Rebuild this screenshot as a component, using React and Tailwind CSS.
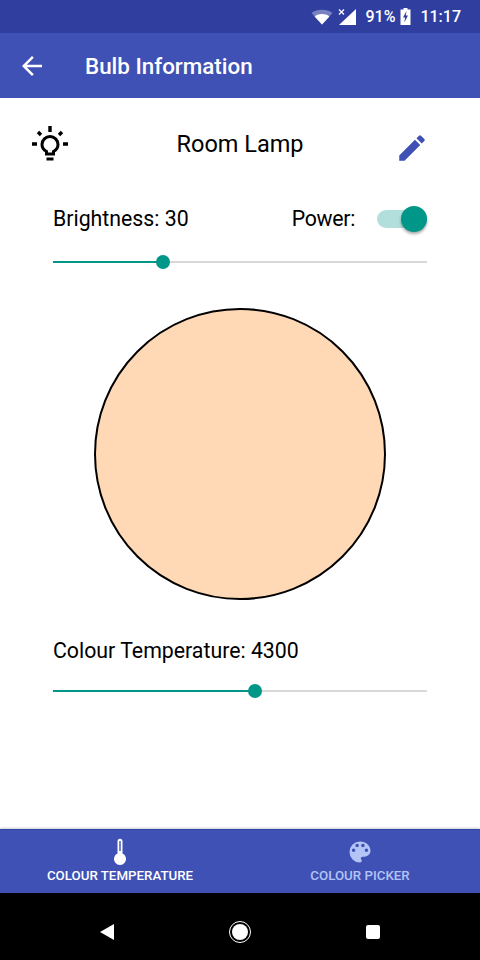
import React from "react";

const font = { fontFamily: "Roboto, sans-serif" };

function Slider({ pct }) {
  return (
    <div className="relative mx-[53px] h-[2px] bg-[#d9d9d9]">
      <div className="h-[2px] bg-[#009688]" style={{ width: pct }} />
      <div className="absolute top-[-6px] w-[14px] h-[14px] rounded-full bg-[#009688]" style={{ left: `calc(${pct} - 7px)` }} />
    </div>
  );
}

export default function App() {
  return (
    <div className="w-[480px] h-[960px] flex flex-col bg-white text-black overflow-hidden" style={font}>
      <div className="h-[33px] bg-[#303f9f] flex items-center justify-end text-white pr-[19px]">
        <svg width="22" height="16" viewBox="0 0 22 15" className="mr-[5px]">
          <path d="M11 15 L0.5 3.6 C6.5 -0.8 15.5 -0.8 21.5 3.6 Z" fill="#fff" fillOpacity="0.35" />
          <path d="M11 15 L3.6 6.9 C8 3.8 14 3.8 18.4 6.9 Z" fill="#fff" />
        </svg>
        <svg width="18" height="16" viewBox="0 0 18 16" className="mr-[9px]">
          <path d="M18 0 V16 H1 Z" fill="#fff" />
          <path d="M1 0.5 L6 5.5 M6 0.5 L1 5.5" stroke="#303f9f" strokeWidth="3" />
          <path d="M1 0.5 L6 5.5 M6 0.5 L1 5.5" stroke="#fff" strokeWidth="1.2" />
        </svg>
        <span className="text-[16px] font-medium mr-[5px] leading-none">91%</span>
        <svg width="11" height="17" viewBox="0 0 10 17" className="mr-[9px]">
          <path d="M3 0 H7 V1.5 H10 V17 H0 V1.5 H3 Z" fill="#fff" />
          <path d="M6 3 L2.5 9.5 H4.6 L3.8 14.5 L7.5 7.5 H5.3 Z" fill="#303f9f" />
        </svg>
        <span className="text-[16px] font-medium leading-none">11:17</span>
      </div>

      <div className="h-[65px] bg-[#3f51b5] flex items-center text-white pt-px">
        <svg width="30" height="30" viewBox="0 0 24 24" className="ml-[17px]" fill="#fff">
          <path d="M20 11H7.83l5.59-5.59L12 4l-8 8 8 8 1.41-1.41L7.83 13H20v-2z" />
        </svg>
        <span className="ml-[38px] text-[22.4px] font-medium leading-none">Bulb Information</span>
      </div>

      <div className="flex-1 flex flex-col">
        <div className="flex items-center justify-between h-[36px] mt-[28px] pl-[30px] pr-[51px] relative">
          <svg width="40" height="37" viewBox="0 0 40 37" fill="none" stroke="#000" className="mt-[1px]">
            <path d="M20 0 V6 M2 18 H7 M33 18 H38 M8 6 L11 9 M32 6 L29 9" strokeWidth="3.4" />
            <path d="M16.5 28 V25.5 C13.5 24 12 21 12 18.5 A8 8 0 0 1 28 18.5 C28 21 26.5 24 23.5 25.5 V28 Z" strokeWidth="3" />
            <path d="M16.5 33 H23.5" strokeWidth="3" />
          </svg>
          <span className="absolute left-0 right-0 top-[1px] bottom-0 flex items-center justify-center text-[23.5px] leading-none">Room Lamp</span>
          <svg width="34" height="34" viewBox="0 0 24 24" fill="#3f51b5" className="mt-[7px]">
            <path d="M3 17.25V21h3.75L17.81 9.94l-3.75-3.75L3 17.25zM20.71 7.04a1 1 0 0 0 0-1.41l-2.34-2.34a1 1 0 0 0-1.41 0l-1.83 1.83 3.75 3.75 1.83-1.83z" />
          </svg>
        </div>

        <div className="flex items-center h-[32px] mt-[41px] pl-[53px] pr-[53px]">
          <span className="text-[21.3px] leading-none">Brightness: 30</span>
          <span className="ml-auto text-[21.3px] leading-none tracking-[-0.3px]">Power:</span>
          <div className="relative w-[50px] h-[18px] ml-[22px] rounded-full bg-[#b2dfdb]">
            <div className="absolute right-0 top-[-4px] w-[26px] h-[26px] rounded-full bg-[#009688] shadow-[0_2px_3px_rgba(0,0,0,0.35)]" />
          </div>
        </div>

        <div className="mt-[26px]"><Slider pct="29.5%" /></div>

        <div className="mt-[45px] mx-auto w-[292px] h-[292px] rounded-full border-2 border-black bg-[#ffd8b5]" />

        <div className="mt-[39px] pl-[53px] text-[21.3px] leading-[24px]">Colour Temperature: 4300</div>
        <div className="mt-[27px]"><Slider pct="54%" /></div>
      </div>

      <div className="h-[64px] bg-[#3f51b5] flex border-t border-[#3049a8] shadow-[0_-1px_2px_rgba(0,0,0,0.2)]">
        <div className="flex-1 flex flex-col items-center text-white">
          <svg width="16" height="28" viewBox="0 0 16 28" className="mt-[8px]" fill="#fff">
            <path d="M5.5 3.2 A2.5 2.5 0 0 1 10.5 3.2 V15.5 A6 6 0 1 1 5.5 15.5 Z" />
            <path d="M8 3 V13" stroke="#3f51b5" strokeWidth="1.4" />
          </svg>
          <span className="text-[13.3px] font-medium leading-none mt-[3px]">COLOUR TEMPERATURE</span>
        </div>
        <div className="flex-1 flex flex-col items-center text-[#b4c4f6]">
          <svg width="28" height="28" viewBox="0 0 24 24" className="mt-[8px]" fill="#b4c4f6">
            <path d="M12 3a9 9 0 0 0 0 18c.83 0 1.5-.67 1.5-1.5 0-.39-.15-.74-.39-1.01-.23-.26-.38-.61-.38-.99 0-.83.67-1.5 1.5-1.5H16c2.76 0 5-2.24 5-5 0-4.42-4.03-8-9-8zm-5.5 9a1.5 1.5 0 1 1 0-3 1.5 1.5 0 0 1 0 3zm3-4a1.5 1.5 0 1 1 0-3 1.5 1.5 0 0 1 0 3zm5 0a1.5 1.5 0 1 1 0-3 1.5 1.5 0 0 1 0 3zm3 4a1.5 1.5 0 1 1 0-3 1.5 1.5 0 0 1 0 3z" />
          </svg>
          <span className="text-[13.3px] font-medium leading-none mt-[3px]">COLOUR PICKER</span>
        </div>
      </div>

      <div className="h-[67px] bg-black flex items-center gap-[115px] pl-[100px] pt-[11px]">
        <svg width="14" height="16" viewBox="0 0 14 16"><path d="M14 0 V16 L0 8 Z" fill="#fff" /></svg>
        <div className="w-[22px] h-[22px] rounded-full border-[1.5px] border-white flex items-center justify-center">
          <div className="w-[16px] h-[16px] rounded-full bg-white" />
        </div>
        <div className="w-[14px] h-[14px] rounded-[2px] bg-white" />
      </div>
    </div>
  );
}
